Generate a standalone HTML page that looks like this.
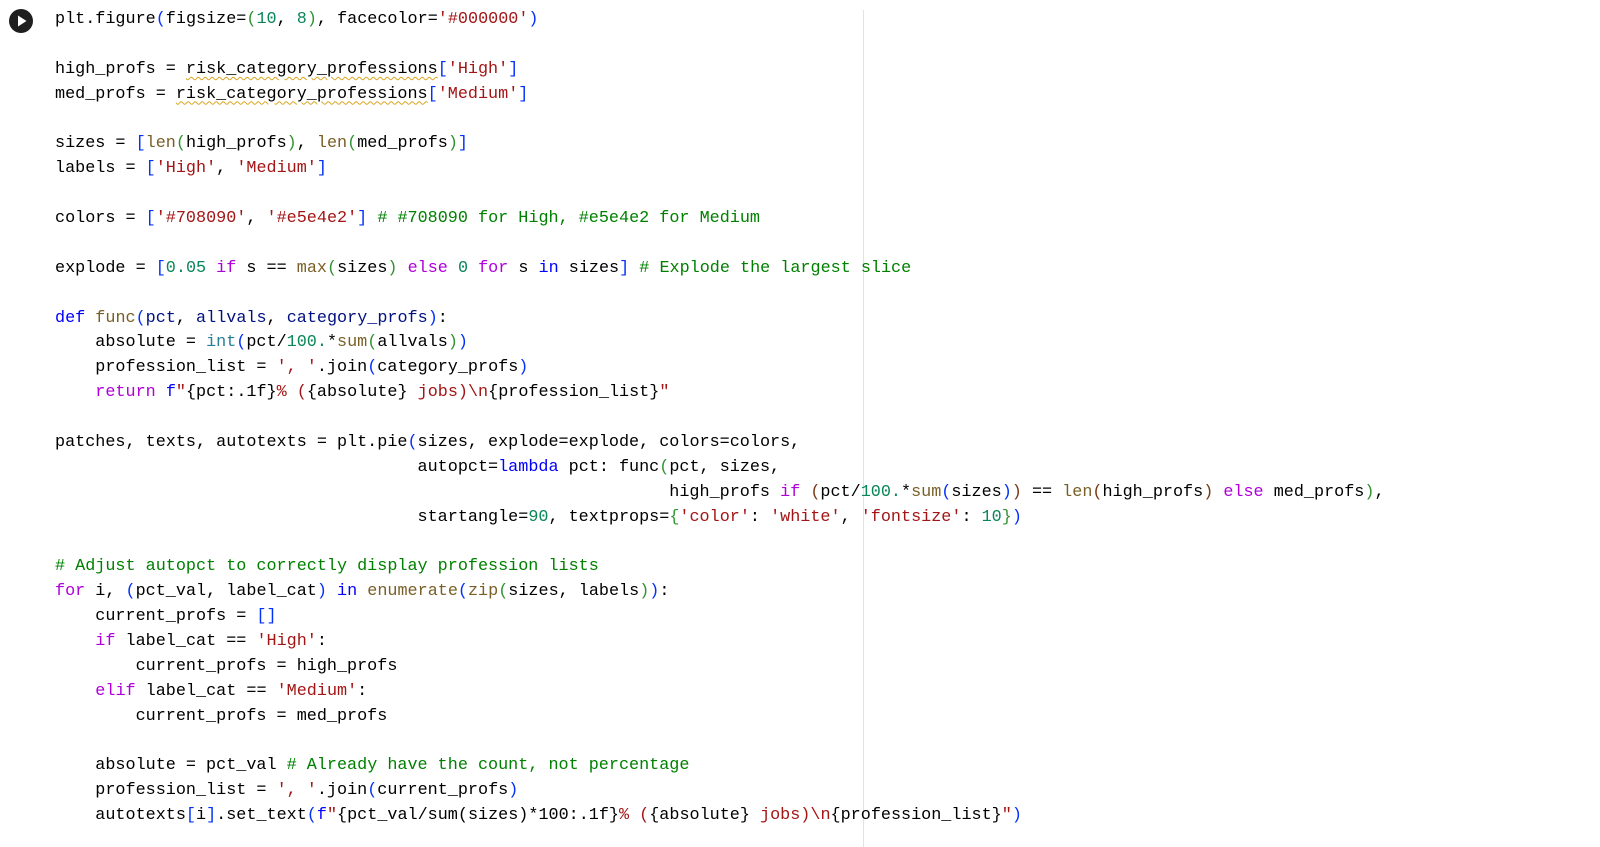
<!DOCTYPE html>
<html><head><meta charset="utf-8"><style>
html,body{margin:0;padding:0;background:#fff;width:1600px;height:847px;overflow:hidden;position:relative}
pre{position:absolute;left:55px;top:8px;margin:0;font-family:"Liberation Mono",monospace;font-size:16.8px;line-height:24.875px;color:#000;white-space:pre}
.k{color:#af00db}.b{color:#0000ff}.s{color:#a31515}.n{color:#098658}.c{color:#008000}.f{color:#795e26}.t{color:#267f99}.v{color:#001080}
.p1{color:#0431fa}.p2{color:#319331}.p3{color:#7b3814}
.w{text-decoration:underline wavy #d9a520;text-decoration-thickness:1px;text-underline-offset:3px}
.div{position:absolute;left:863px;top:10px;width:1px;height:837px;background:#e2e2e2}
.play{position:absolute;left:9px;top:9px;width:24px;height:24px;border-radius:50%;background:#1f1f1f}
</style></head><body>
<div class="div"></div>
<div class="play"><svg width="24" height="24" viewBox="0 0 24 24"><path d="M9 6.5 L17.5 12 L9 17.5 Z" fill="#fff"/></svg></div>
<pre>plt.figure<span class="p1">(</span>figsize=<span class="p2">(</span><span class="n">10</span>, <span class="n">8</span><span class="p2">)</span>, facecolor=<span class="s">'#000000'</span><span class="p1">)</span>

high_profs = <span class="w">risk_category_professions</span><span class="p1">[</span><span class="s">'High'</span><span class="p1">]</span>
med_profs = <span class="w">risk_category_professions</span><span class="p1">[</span><span class="s">'Medium'</span><span class="p1">]</span>

sizes = <span class="p1">[</span><span class="f">len</span><span class="p2">(</span>high_profs<span class="p2">)</span>, <span class="f">len</span><span class="p2">(</span>med_profs<span class="p2">)</span><span class="p1">]</span>
labels = <span class="p1">[</span><span class="s">'High'</span>, <span class="s">'Medium'</span><span class="p1">]</span>

colors = <span class="p1">[</span><span class="s">'#708090'</span>, <span class="s">'#e5e4e2'</span><span class="p1">]</span> <span class="c"># #708090 for High, #e5e4e2 for Medium</span>

explode = <span class="p1">[</span><span class="n">0.05</span> <span class="k">if</span> s == <span class="f">max</span><span class="p2">(</span>sizes<span class="p2">)</span> <span class="k">else</span> <span class="n">0</span> <span class="k">for</span> s <span class="b">in</span> sizes<span class="p1">]</span> <span class="c"># Explode the largest slice</span>

<span class="b">def</span> <span class="f">func</span><span class="p1">(</span><span class="v">pct</span>, <span class="v">allvals</span>, <span class="v">category_profs</span><span class="p1">)</span>:
    absolute = <span class="t">int</span><span class="p1">(</span>pct/<span class="n">100.</span>*<span class="f">sum</span><span class="p2">(</span>allvals<span class="p2">)</span><span class="p1">)</span>
    profession_list = <span class="s">', '</span>.join<span class="p1">(</span>category_profs<span class="p1">)</span>
    <span class="k">return</span> <span class="b">f</span><span class="s">"</span>{pct:.1f}<span class="s">% (</span>{absolute}<span class="s"> jobs)\n</span>{profession_list}<span class="s">"</span>

patches, texts, autotexts = plt.pie<span class="p1">(</span>sizes, explode=explode, colors=colors,
                                    autopct=<span class="b">lambda</span> pct: func<span class="p2">(</span>pct, sizes,
                                                             high_profs <span class="k">if</span> <span class="p3">(</span>pct/<span class="n">100.</span>*<span class="f">sum</span><span class="p1">(</span>sizes<span class="p1">)</span><span class="p3">)</span> == <span class="f">len</span><span class="p3">(</span>high_profs<span class="p3">)</span> <span class="k">else</span> med_profs<span class="p2">)</span>,
                                    startangle=<span class="n">90</span>, textprops=<span class="p2">{</span><span class="s">'color'</span>: <span class="s">'white'</span>, <span class="s">'fontsize'</span>: <span class="n">10</span><span class="p2">}</span><span class="p1">)</span>

<span class="c"># Adjust autopct to correctly display profession lists</span>
<span class="k">for</span> i, <span class="p1">(</span>pct_val, label_cat<span class="p1">)</span> <span class="b">in</span> <span class="f">enumerate</span><span class="p1">(</span><span class="f">zip</span><span class="p2">(</span>sizes, labels<span class="p2">)</span><span class="p1">)</span>:
    current_profs = <span class="p1">[]</span>
    <span class="k">if</span> label_cat == <span class="s">'High'</span>:
        current_profs = high_profs
    <span class="k">elif</span> label_cat == <span class="s">'Medium'</span>:
        current_profs = med_profs

    absolute = pct_val <span class="c"># Already have the count, not percentage</span>
    profession_list = <span class="s">', '</span>.join<span class="p1">(</span>current_profs<span class="p1">)</span>
    autotexts<span class="p1">[</span>i<span class="p1">]</span>.set_text<span class="p1">(</span><span class="b">f</span><span class="s">"</span>{pct_val/sum(sizes)*100:.1f}<span class="s">% (</span>{absolute}<span class="s"> jobs)\n</span>{profession_list}<span class="s">"</span><span class="p1">)</span></pre>
</body></html>
